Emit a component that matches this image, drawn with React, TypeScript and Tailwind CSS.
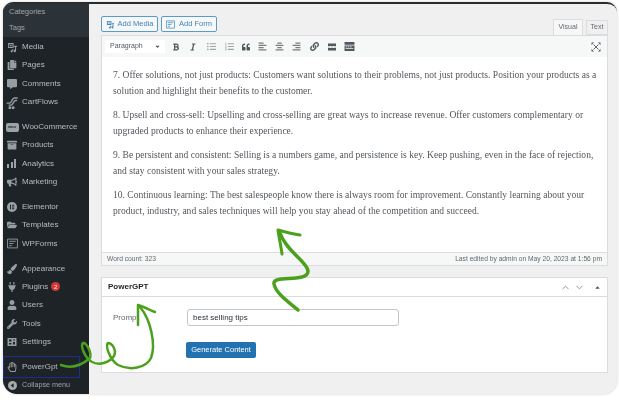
import React from 'react';
import {
  FaBold,
  FaItalic,
  FaListUl,
  FaListOl,
  FaQuoteLeft,
  FaAlignLeft,
  FaAlignCenter,
  FaAlignRight,
  FaLink,
  FaCopy,
  FaCommentAlt,
  FaArchive,
  FaBullhorn,
  FaFolderOpen,
  FaPaintBrush,
  FaPlug,
  FaUser,
  FaWrench,
  FaRegHandPaper,
  FaCaretUp,
  FaCaretDown,
} from 'react-icons/fa';
import { ChevronUp, ChevronDown } from 'lucide-react';

const ic = 'h-[10px] w-[10px] fill-current';

function MediaIcon({ className = 'h-[11px] w-[11px]' }: { className?: string }) {
  return (
    <svg viewBox="0 0 20 20" className={className} fill="currentColor">
      <path d="M2 2h10v9H2z M4 4v5h6V4z" fillRule="evenodd" />
      <circle cx="7" cy="6.500" r="1.600" />
      <path d="M15 7h3v2h-1.500v7.500a2.200 2.200 0 1 1-2-2.200V9h-2V7zM9 13h3v1.500h-1.500v2.500a2 2 0 1 1-1.500-2z" />
    </svg>
  );
}

function CartFlowsIcon() {
  return (
    <svg viewBox="0 0 20 20" className="h-[13px] w-[13px]" fill="none" stroke="currentColor" strokeWidth="2.200">
      <path d="M1 11h5c3 0 3-8 7-8h5M4 14h4c3 0 3-7 7-7h2" />
      <circle cx="6" cy="18" r="1.200" fill="currentColor" />
      <circle cx="11" cy="18" r="1.200" fill="currentColor" />
    </svg>
  );
}

function WooIcon() {
  return (
    <div className="flex h-[9px] w-[13px] items-center justify-center rounded-[2px] bg-[#9ca2a7]">
      <span className="text-[4px] leading-none font-bold text-[#1d2327]">woo</span>
    </div>
  );
}

function BarsIcon() {
  return (
    <div className="flex h-[9px] w-[10px] items-end gap-[1.500px]">
      <span className="h-[4px] w-[2px] bg-[#9ca2a7]" />
      <span className="h-[6px] w-[2px] bg-[#9ca2a7]" />
      <span className="h-[9px] w-[2px] bg-[#9ca2a7]" />
    </div>
  );
}

function ElementorIcon() {
  return (
    <svg viewBox="0 0 20 20" className="h-[10px] w-[10px]">
      <circle cx="10" cy="10" r="10" fill="#9ca2a7" />
      <path d="M6 5.500h2v9H6zM10 5.500h4.500v2H10zM10 9h4.500v2H10zM10 12.500h4.500v2H10z" fill="#1d2327" />
    </svg>
  );
}

function FormsIcon() {
  return (
    <svg viewBox="0 0 20 20" className="h-[11px] w-[11px]" fill="none" stroke="currentColor" strokeWidth="1.600">
      <path d="M1 2h18v16H1z" />
      <path d="M4 6h12M4 10h8M4 14h5" />
    </svg>
  );
}

function SettingsIcon() {
  return (
    <svg viewBox="0 0 20 20" className="h-[10px] w-[10px]" fill="currentColor" fillRule="evenodd">
      <path d="M1 2h18v16H1zM4 5v4h5V5zM12 5v2h4V5zM12 10v5h4v-5zM4 12v3h5v-3z" />
    </svg>
  );
}

function CollapseIcon() {
  return (
    <svg viewBox="0 0 20 20" className="h-[9px] w-[9px]">
      <circle cx="10" cy="10" r="10" fill="#a7aaad" />
      <path d="M12.500 5v10L6 10z" fill="#1d2327" />
    </svg>
  );
}

function MoreIcon() {
  return (
    <svg viewBox="0 0 20 20" className="h-[10px] w-[10px]" fill="currentColor">
      <path d="M2 3h16v5H2zM2 9.500h4v1H2zM8 9.500h4v1H8zM14 9.500h4v1h-4zM2 12h16v5H2z" />
    </svg>
  );
}

function SinkIcon() {
  return (
    <svg viewBox="0 0 20 20" className="h-[11px] w-[11px]" fill="currentColor">
      <path d="M1 2h18v5H1zM1 8h18v10H1zM3 10v1.500h3V10zM7 10v1.500h3V10zM11 10v1.500h3V10zM3 13v1.500h14V13z" fillRule="evenodd" />
    </svg>
  );
}

function FullscreenIcon() {
  return (
    <svg viewBox="0 0 20 20" className="h-[10px] w-[10px]" fill="none" stroke="currentColor" strokeWidth="1.800">
      <path d="M5 5l10 10M15 5L5 15" />
      <path d="M1 1h5L1 6zM19 1h-5l5 5zM1 19h5l-5-5zM19 19h-5l5-5z" fill="currentColor" stroke="none" />
    </svg>
  );
}

const menuGroups: { label: string; icon: React.ReactNode; badge?: string }[][] = [
  [
    { label: 'Media', icon: <MediaIcon /> },
    { label: 'Pages', icon: <FaCopy className={ic} /> },
    { label: 'Comments', icon: <FaCommentAlt className={ic} /> },
    { label: 'CartFlows', icon: <CartFlowsIcon /> },
  ],
  [
    { label: 'WooCommerce', icon: <WooIcon /> },
    { label: 'Products', icon: <FaArchive className={ic} /> },
    { label: 'Analytics', icon: <BarsIcon /> },
    { label: 'Marketing', icon: <FaBullhorn className={ic} /> },
  ],
  [
    { label: 'Elementor', icon: <ElementorIcon /> },
    { label: 'Templates', icon: <FaFolderOpen className={ic} /> },
    { label: 'WPForms', icon: <FormsIcon /> },
  ],
  [
    { label: 'Appearance', icon: <FaPaintBrush className={ic} /> },
    { label: 'Plugins', icon: <FaPlug className={ic} />, badge: '2' },
    { label: 'Users', icon: <FaUser className={ic} /> },
    { label: 'Tools', icon: <FaWrench className={ic} /> },
    { label: 'Settings', icon: <SettingsIcon /> },
  ],
  [{ label: 'PowerGpt', icon: <FaRegHandPaper className={ic} /> }],
];

const paragraphs = [
  '7. Offer solutions, not just products: Customers want solutions to their problems, not just products. Position your products as a solution and highlight their benefits to the customer.',
  '8. Upsell and cross-sell: Upselling and cross-selling are great ways to increase revenue. Offer customers complementary or upgraded products to enhance their experience.',
  '9. Be persistent and consistent: Selling is a numbers game, and persistence is key. Keep pushing, even in the face of rejection, and stay consistent with your sales strategy.',
  '10. Continuous learning: The best salespeople know there is always room for improvement. Constantly learning about your product, industry, and sales techniques will help you stay ahead of the competition and succeed.',
];

const toolbarIcons = [
  { x: 'w-[17px]', icon: <FaBold className="h-[8px] w-[8px]" />, tone: 'text-[#50575e]' },
  { x: 'w-[18px]', icon: <FaItalic className="h-[8px] w-[8px]" />, tone: 'text-[#50575e]' },
  { x: 'w-[18px]', icon: <FaListUl className="h-[9px] w-[9px]" />, tone: 'text-[#a0a5aa]' },
  { x: 'w-[18px]', icon: <FaListOl className="h-[9px] w-[9px]" />, tone: 'text-[#a0a5aa]' },
  { x: 'w-[16px]', icon: <FaQuoteLeft className="h-[8px] w-[8px]" />, tone: 'text-[#50575e]' },
  { x: 'w-[17px]', icon: <FaAlignLeft className="h-[9px] w-[9px]" />, tone: 'text-[#787c82]' },
  { x: 'w-[17px]', icon: <FaAlignCenter className="h-[9px] w-[9px]" />, tone: 'text-[#787c82]' },
  { x: 'w-[17px]', icon: <FaAlignRight className="h-[9px] w-[9px]" />, tone: 'text-[#787c82]' },
  { x: 'w-[18px]', icon: <FaLink className="h-[9px] w-[9px]" />, tone: 'text-[#50575e]' },
  { x: 'w-[18px]', icon: <MoreIcon />, tone: 'text-[#50575e]' },
  { x: 'w-[17px]', icon: <SinkIcon />, tone: 'text-[#50575e]' },
];

function Sidebar() {
  return (
    <aside className="flex w-[86px] shrink-0 flex-col bg-[#1d2327] text-[8px] text-[#b9bcbf]">
      <div className="flex h-[34px] flex-col gap-[5px] bg-[#2c3338] pt-[2px] pl-[6px] text-[7.500px] text-[#a0a3a6]">
        <span className="leading-[11px]">Categories</span>
        <span className="leading-[11px]">Tags</span>
      </div>
      <div className="flex flex-col gap-[6.400px] pt-[1px]">
        {menuGroups.map((group, i) => (
          <div key={i} className="flex flex-col">
            {group.map((item) => (
              <div key={item.label} className="flex h-[18.400px] items-center">
                <span className="flex w-[17px] shrink-0 justify-center pl-[1px] text-[#979da2]">{item.icon}</span>
                <span className="ml-[2px] leading-none">{item.label}</span>
                {item.badge && (
                  <span className="ml-[3px] flex h-[9px] w-[9px] items-center justify-center rounded-full bg-[#d63638] text-[6px] leading-none text-white">
                    {item.badge}
                  </span>
                )}
              </div>
            ))}
          </div>
        ))}
        <div className="-mt-[6.500px] flex h-[18px] items-center text-[7.200px] text-[#a0a3a6]">
          <span className="flex w-[17px] justify-center pl-[1px]">
            <CollapseIcon />
          </span>
          <span className="ml-[2px]">Collapse menu</span>
        </div>
      </div>
    </aside>
  );
}

function Editor() {
  return (
    <div className="flex flex-col">
      <div className="flex h-[19px] items-start justify-between">
        <div className="flex gap-[3px]">
          <button className="flex h-[16px] w-[57px] items-center justify-center gap-[3px] rounded-[2px] border border-[#5b9bcb] bg-[#f6f7f7] text-[7.500px] text-[#3f86bd]">
            <MediaIcon className="h-[9px] w-[9px]" />
            Add Media
          </button>
          <button className="flex h-[16px] w-[56px] items-center justify-center gap-[4px] rounded-[2px] border border-[#5b9bcb] bg-[#f6f7f7] text-[7.500px] text-[#3f86bd]">
            <svg viewBox="0 0 20 20" className="h-[9px] w-[9px]" fill="none" stroke="currentColor" strokeWidth="1.600">
              <path d="M1 2h18v16H1zM4 6h12M4 10h8M4 14h5" />
            </svg>
            Add Form
          </button>
        </div>
        <div className="mt-[3px] flex h-[16px] items-end gap-[3px] text-[7px] text-[#646970]">
          <span className="flex h-[16px] w-[30px] items-center justify-center border border-b-0 border-[#dcdcde] bg-[#f6f7f7]">Visual</span>
          <span className="flex h-[15px] w-[22px] items-center justify-center border border-[#dcdcde] bg-[#f0f0f1]">Text</span>
        </div>
      </div>
      <div className="flex h-[22px] items-center justify-between border border-b-0 border-[#dcdcde] bg-[#f6f7f7] pr-[6px] pl-[3px]">
        <div className="flex items-center">
          <div className="mr-[2px] flex h-[13px] w-[60px] items-center justify-between bg-white pr-[4px] pl-[5px] text-[7px] text-[#50575e]">
            Paragraph
            <FaCaretDown className="h-[7px] w-[7px]" />
          </div>
          {toolbarIcons.map((t, i) => (
            <span key={i} className={`flex justify-center ${t.x} ${t.tone}`}>
              {t.icon}
            </span>
          ))}
        </div>
        <span className="text-[#50575e]">
          <FullscreenIcon />
        </span>
      </div>
      <div className="flex h-[195px] flex-col gap-[7.600px] border-x border-[#dcdcde] bg-white pt-[10px] pr-[9px] pl-[11px] font-['Liberation_Serif',serif] text-[9.550px] leading-[16.200px] text-[#53585d]">
        {paragraphs.map((p) => (
          <p key={p}>{p}</p>
        ))}
      </div>
      <div className="flex h-[14px] items-center justify-between border border-[#dcdcde] bg-[#f6f7f7] px-[5px] text-[6.700px] text-[#646970]">
        <span>Word count: 323</span>
        <span>Last edited by admin on May 20, 2023 at 1:56 pm</span>
      </div>
    </div>
  );
}

function PowerGptPanel() {
  return (
    <div className="mt-[11px] flex h-[96px] flex-col border border-[#dcdcde] bg-white">
      <div className="flex h-[19px] shrink-0 items-center justify-between border-b border-[#dcdcde] pr-[6px] pl-[6px]">
        <span className="text-[8px] font-bold text-[#1d2327]">PowerGPT</span>
        <div className="flex items-center gap-[3px] text-[#8c8f94]">
          <ChevronUp className="h-[11px] w-[11px]" />
          <ChevronDown className="h-[11px] w-[11px]" />
          <FaCaretUp className="ml-[6px] h-[7px] w-[7px] text-[#50575e]" />
        </div>
      </div>
      <div className="flex flex-col pt-[12px] pl-[11px]">
        <div className="flex items-center">
          <label className="w-[74px] text-[8px] text-[#646970]">Prompt</label>
          <div className="flex h-[17px] w-[212px] items-center rounded-[3px] border border-[#c3c4c7] bg-white px-[5px] text-[8px] text-[#2c3338]">
            best selling tips
          </div>
        </div>
        <button className="mt-[16px] ml-[73px] flex h-[16px] w-[70px] items-center justify-center rounded-[2px] bg-[#2271b1] text-[7.500px] text-white">
          Generate Content
        </button>
      </div>
    </div>
  );
}

export default function App() {
  return (
    <div className="relative h-[400px] w-[619px] overflow-hidden bg-white pt-[2px] pl-[3px] font-['Liberation_Sans',Arial,sans-serif]">
      <div className="blur-[0.6px]">
        <div className="flex h-[392px] w-[614px] overflow-hidden rounded-t-[10px] rounded-b-[14px] border-t-2 border-[#2a2d30] bg-[#f0f0f1] shadow-[0_0_3px_rgba(0,0,0,0.2)]">
          <Sidebar />
          <main className="flex-1 pt-[12px] pr-[9px] pl-[12px]">
            <Editor />
            <PowerGptPanel />
          </main>
        </div>
      </div>
      {/* blue highlight around the PowerGpt item */}
      <div className="absolute top-[356px] left-[3px] h-[22px] w-[77px] border border-[#1b2f8f]" />
      {/* hand drawn arrows */}
      <svg viewBox="0 0 619 400" className="pointer-events-none absolute inset-0 h-[400px] w-[619px]" fill="none" stroke="#4ba01e" strokeLinecap="round" strokeLinejoin="round">
        <path
          d="M298 310C290 303 276 294 274 284C273 278 284 279 296 278C306 277 310 274 307 268C302 258 286 250 280 233"
          strokeWidth="3.500"
        />
        <path d="M282 254C281 246 279 238 278 230C285 232 292 234 300 235" strokeWidth="3" />
        <path
          d="M61 365C72 369 82 365 90 358C92 352 86 342 83 343C80 346 85 358 92 362C100 366 110 362 114 356C117 350 112 343 108 343C105 346 110 360 118 365C130 371 146 368 151 358C156 345 151 320 140 307"
          strokeWidth="2.500"
        />
        <path d="M138 325C138 318 138 312 138 305C144 307 150 310 155 312" strokeWidth="2.500" />
      </svg>
    </div>
  );
}
